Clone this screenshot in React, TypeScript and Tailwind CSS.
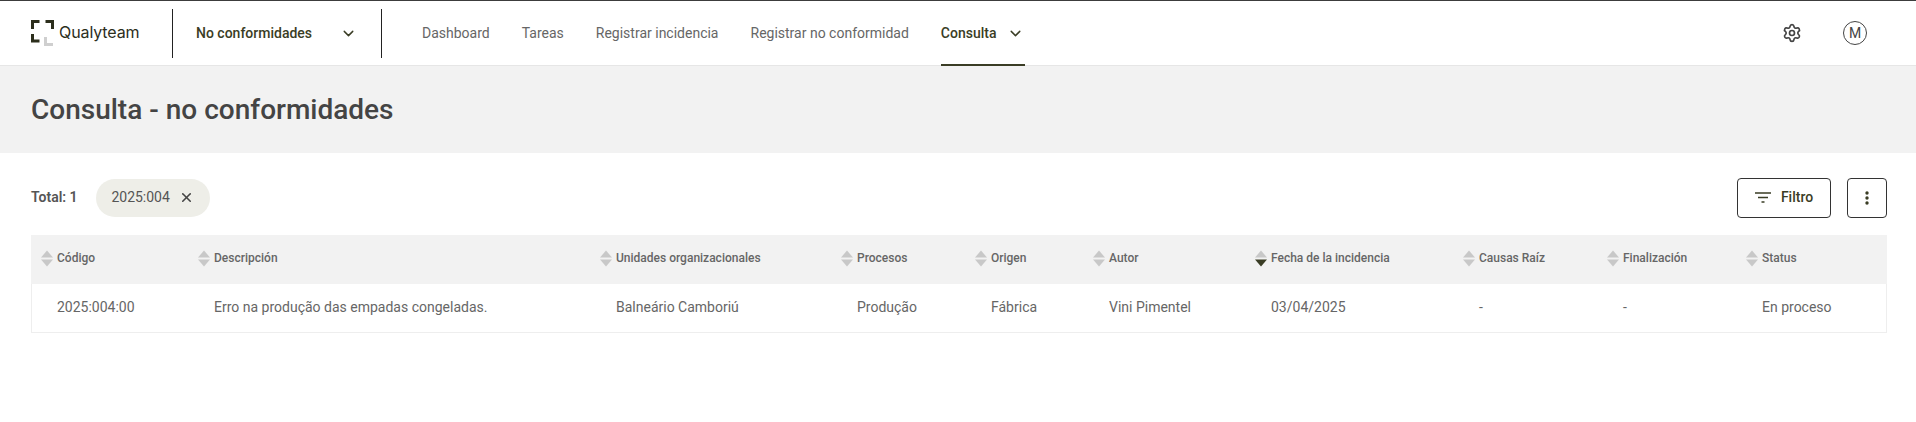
import React from 'react'
import { ChevronDown, Settings, X } from 'lucide-react'

const columns = [
  { label: 'Código', value: '2025:004:00' },
  { label: 'Descripción', value: 'Erro na produção das empadas congeladas.' },
  { label: 'Unidades organizacionales', value: 'Balneário Camboriú' },
  { label: 'Procesos', value: 'Produção' },
  { label: 'Origen', value: 'Fábrica' },
  { label: 'Autor', value: 'Vini Pimentel' },
  { label: 'Fecha de la incidencia', value: '03/04/2025', sorted: true },
  { label: 'Causas Raíz', value: '-' },
  { label: 'Finalización', value: '-' },
  { label: 'Status', value: 'En proceso' },
]

const gridCols = 'grid grid-cols-[157px_402px_241px_134px_118px_162px_208px_144px_139px_1fr]'

function SortIcon({ active }: { active?: boolean }) {
  return (
    <svg width="12" height="17" viewBox="0 0 12 17" className="shrink-0">
      <path d="M6 0.5 12 7.5H0Z" fill="#c8c8c8" />
      <path d="M0 9.5H12L6 16.5Z" fill={active ? '#3a3d25' : '#c8c8c8'} />
    </svg>
  )
}

function Logo() {
  return (
    <svg width="24" height="26" viewBox="0 0 24 26" className="shrink-0">
      <path d="M1.5 9V1.5H8.5" fill="none" stroke="#2c2e1c" strokeWidth="3" />
      <path d="M14.5 1.5H21.5V9" fill="none" stroke="#2c2e1c" strokeWidth="3" />
      <path d="M1.5 14V21H8.5" fill="none" stroke="#2c2e1c" strokeWidth="3" />
      <path d="M14.5 17V24.5H22" fill="none" stroke="#cfcfcf" strokeWidth="3" />
    </svg>
  )
}

export default function App() {
  return (
    <div className="min-h-[422px] bg-white font-['Roboto',sans-serif] text-[#555]">
      <header className="h-[66px] border-t border-t-[#3c3c3c] border-b border-b-[#e6e6e6] flex items-center pl-[31px] pr-[49px]">
        <div className="flex items-center gap-[4px] w-[141px]">
          <Logo />
          <span className="text-[16px] text-[#2c2e1c] font-['Inter',sans-serif] tracking-[-0.1px] -mt-[3px]">Qualyteam</span>
        </div>
        <div className="h-[49px] w-px bg-[#222]" />
        <div className="flex items-center w-[208px] pl-[23px] pr-[24px] justify-between">
          <span className="text-[14px] font-medium text-[#3a3d25]">No conformidades</span>
          <ChevronDown size={17} className="text-[#3a3d25]" />
        </div>
        <div className="h-[49px] w-px bg-[#222]" />
        <nav className="flex items-center h-full ml-[40px] gap-[32px] text-[14px] text-[#666]">
          <span>Dashboard</span>
          <span>Tareas</span>
          <span>Registrar incidencia</span>
          <span>Registrar no conformidad</span>
          <span className="h-full relative flex items-center gap-[10px] font-medium text-[#3a3d25] pr-[1px]">
            Consulta
            <ChevronDown size={17} />
            <span className="absolute left-0 right-0 bottom-[-1px] h-[2px] bg-[#3a3d25]" />
          </span>
        </nav>
        <div className="ml-auto flex items-center gap-[41px]">
          <Settings size={20} className="text-[#444]" />
          <div className="w-[24px] h-[24px] rounded-full border border-[#444] flex items-center justify-center text-[14px] text-[#444]">M</div>
        </div>
      </header>

      <div className="h-[87px] bg-[#f2f2f2] flex items-center pl-[31px]">
        <h1 className="text-[28px] font-medium text-[#444]">Consulta - no conformidades</h1>
      </div>

      <main className="px-[31px] pr-[29px]">
        <div className="h-[82px] pt-[7px] flex items-center">
          <span className="text-[14px] font-semibold text-[#555]">Total: 1</span>
          <span className="ml-[18px] h-[38px] w-[114px] rounded-full bg-[#eeeee8] flex items-center justify-center gap-[9px] text-[14px] text-[#555]">
            2025:004
            <X size={15} strokeWidth={2.5} className="text-[#444]" />
          </span>
          <button className="ml-auto h-[40px] w-[94px] rounded-[4px] border border-[#333] flex items-center justify-center gap-[10px] text-[14px] font-medium text-[#3a3d25]">
            <svg width="16" height="11" viewBox="0 0 16 11">
              <path d="M0 1H16M3 5.5H13M6.5 10H9.5" stroke="#3a3d25" strokeWidth="1.5" />
            </svg>
            Filtro
          </button>
          <button className="ml-[16px] h-[40px] w-[40px] rounded-[4px] border border-[#333] flex items-center justify-center">
            <svg width="4" height="14" viewBox="0 0 4 14" fill="#3a3d25">
              <circle cx="2" cy="2" r="1.7" />
              <circle cx="2" cy="7" r="1.7" />
              <circle cx="2" cy="12" r="1.7" />
            </svg>
          </button>
        </div>

        <div className="border border-[#eeeeee] border-t-0">
          <div className={`${gridCols} h-[49px] items-center bg-[#f2f2f2] pl-[10px] -mx-px`}>
            {columns.map(c => (
              <div key={c.label} className="flex items-center gap-[4px] text-[12px] font-medium text-[#666] -mt-[3px]">
                <SortIcon active={c.sorted} />
                {c.label}
              </div>
            ))}
          </div>
          <div className={`${gridCols} h-[48px] items-center pl-[10px] -mx-px`}>
            {columns.map(c => (
              <div key={c.label} className="pl-[16px] text-[14px] text-[#666] -mt-[1px]">{c.value}</div>
            ))}
          </div>
        </div>
      </main>
    </div>
  )
}
